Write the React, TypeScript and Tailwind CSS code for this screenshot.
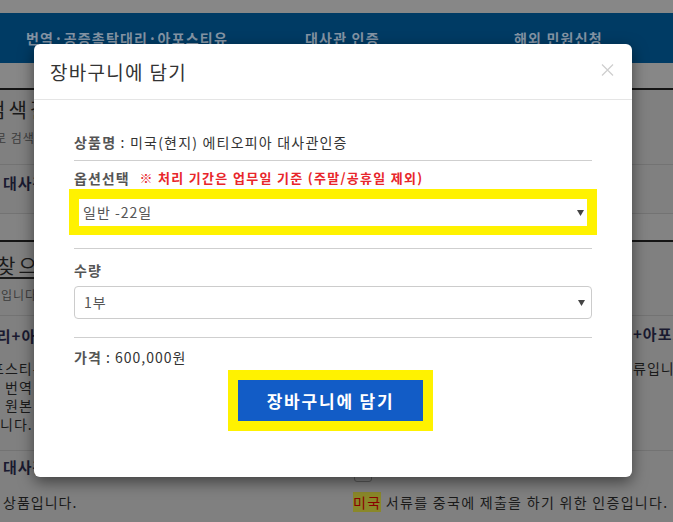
import React from "react";

function Arrow() {
  return (
    <svg width="7" height="7" viewBox="0 0 7 7" className="shrink-0">
      <path d="M0 1 L7 1 L3.5 7 Z" fill="#444" />
    </svg>
  );
}

export default function App() {
  return (
    <div className="relative w-[673px] h-[522px] overflow-hidden bg-[#808080] tracking-[1px] font-['Noto_Sans_CJK_KR','Noto_Sans',sans-serif]">
      {/* background page */}
      <div className="h-[13px] bg-[#878787]" />
      <div className="h-[50px] bg-[#003b64] flex items-center text-[14px] font-bold text-[#8494a4] tracking-[1.2px] whitespace-nowrap">
        <div className="w-[305px] shrink-0 pl-[26px]">번역·공증촉탁대리·아포스티유</div>
        <div className="w-[209px] shrink-0">대사관 인증</div>
        <div className="flex-1 min-w-0">해외 민원신청</div>
      </div>
      <div className="h-[25px] bg-[#878787]" />
      <div className="h-[2px] bg-[#151515]" />

      {/* R1 */}
      <div className="h-[75px] border-b border-[#737373] whitespace-nowrap">
        <div className="pt-[8px] ml-[-13px] text-[20px] leading-[24px] tracking-[3px] text-[#1a1a1a]">검색결과</div>
        <div className="mt-[8px] ml-[-17px] text-[12px] leading-[16px] text-[#3c3c3c]">으로 검색</div>
      </div>
      {/* R2 */}
      <div className="h-[49px] border-b border-[#737373] whitespace-nowrap">
        <div className="pt-[8px] pl-[3px] text-[15px] leading-[20px] font-bold text-[#1a1a30]">대사관 인증</div>
      </div>
      {/* R3 */}
      <div className="h-[26px] bg-[#838383]" />
      <div className="h-[2px] bg-[#151515]" />
      {/* R4 */}
      <div className="h-[74px] border-b border-[#737373] whitespace-nowrap">
        <div className="pt-[12px] ml-[-3px] text-[20px] leading-[24px] tracking-[3px] text-[#1a1a1a] underline underline-offset-[3px]">찾으시는</div>
        <div className="mt-[9px] ml-[-11px] text-[12px] leading-[16px] text-[#3c3c3c]">중입니다</div>
      </div>
      {/* R5 */}
      <div className="h-[135px] border-b border-[#737373] flex whitespace-nowrap">
        <div className="w-[633px] shrink-0 overflow-hidden">
          <div className="pt-[10px] ml-[-18px] text-[15px] leading-[20px] font-bold text-[#1a1a30]">대리+아포스티유</div>
          <div className="mt-[13px] text-[14px] leading-[18.5px] text-[#1a1a1a]">
            <div className="ml-[-9px]">포스티유 인증</div>
            <div className="pl-[5px]">번역 공증</div>
            <div className="pl-[5px]">원본 대조</div>
            <div className="ml-[0px]">니다.</div>
          </div>
        </div>
        <div className="flex-1 min-w-0">
          <div className="pt-[8px] text-[15px] leading-[20px] font-bold text-[#1a1a30]">+아포스티유</div>
          <div className="mt-[15px] text-[14px] leading-[18.5px] text-[#1a1a1a]">류입니다.</div>
        </div>
      </div>
      {/* R6 */}
      <div className="flex whitespace-nowrap">
        <div className="w-[353px] shrink-0">
          <div className="pt-[6px] pl-[3px] text-[15px] leading-[20px] font-bold text-[#1a1a30]">대사관 인증</div>
          <div className="mt-[15px] pl-[3px] text-[14px] leading-[20px] text-[#1a1a1a]">상품입니다.</div>
        </div>
        <div className="flex-1 min-w-0">
          <div className="mt-[13px] ml-[1px] w-[18px] h-[18px] border border-[#5a5a5a] rounded-[3px]" />
          <div className="mt-[10px] text-[14px] leading-[20px] text-[#1a1a1a] tracking-[1.3px]">
            <span className="bg-[#8a882a] text-[#8a0000]">미국</span> 서류를 중국에 제출을 하기 위한 인증입니다.
          </div>
        </div>
      </div>

      {/* modal */}
      <div className="absolute left-[34px] top-[44px] w-[598px] h-[433px] bg-white rounded-[6px] shadow-[0_5px_15px_rgba(0,0,0,0.5)] flex flex-col">
        <div className="h-[56px] border-b border-[#e5e5e5] flex items-center justify-between pl-[16px] pr-[16px]">
          <div className="text-[19px] leading-[24px] tracking-[1.3px] text-[#333]">장바구니에 담기</div>
          <svg width="13" height="12" viewBox="0 0 13 12" className="mt-[-4px] mr-[2px]">
            <path d="M1 0.5 L12 11.5 M12 0.5 L1 11.5" stroke="#cfcfcf" strokeWidth="1.3" />
          </svg>
        </div>
        <div className="px-[40px] flex flex-col">
          <div className="mt-[32px] h-[20px] text-[14px] leading-[20px] text-[#333] whitespace-nowrap tracking-[1.2px]">
            <span className="font-bold text-[#555]">상품명</span> : 미국(현지) 에티오피아 대사관인증
          </div>
          <div className="mt-[8px] h-px bg-[#cfcfcf]" />
          <div className="mt-[7px] h-[20px] text-[14px] leading-[20px] whitespace-nowrap flex items-center">
            <span className="font-bold text-[#555]">옵션선택</span>
            <span className="ml-[10px] text-[13px] font-bold text-[#e8262b] tracking-[1.3px]">※ 처리 기간은 업무일 기준 (주말/공휴일 제외)</span>
          </div>
          <div className="mt-[1px] ml-[-5px] w-[528px] h-[46px] bg-[#fff200] pt-[10px] pb-[9px] px-[10px]">
            <div className="h-full bg-white flex items-center justify-between pl-[4px] pr-[3px] text-[14px] text-[#555]">
              <span>일반 -22일</span>
              <Arrow />
            </div>
          </div>
          <div className="mt-[13px] h-px bg-[#cfcfcf]" />
          <div className="mt-[11px] h-[20px] text-[14px] leading-[20px] font-bold text-[#555]">수량</div>
          <div className="mt-[6px] h-[33px] border border-[#cccccc] rounded-[4px] flex items-center justify-between pl-[9px] pr-[6px] text-[14px] text-[#555]">
            <span>1부</span>
            <Arrow />
          </div>
          <div className="mt-[18px] h-px bg-[#cfcfcf]" />
          <div className="mt-[9px] h-[20px] text-[14px] leading-[20px] text-[#333] whitespace-nowrap">
            <span className="font-bold text-[#555]">가격</span> : 600,000원
          </div>
          <div className="mt-[3px] ml-[154px] w-[205px] h-[61px] bg-[#fff200] p-[10px]">
            <div className="w-full h-full bg-[#125cc6] flex items-center justify-center text-white font-bold text-[17px] tracking-[1.8px]">
              장바구니에 담기
            </div>
          </div>
        </div>
      </div>
    </div>
  );
}
